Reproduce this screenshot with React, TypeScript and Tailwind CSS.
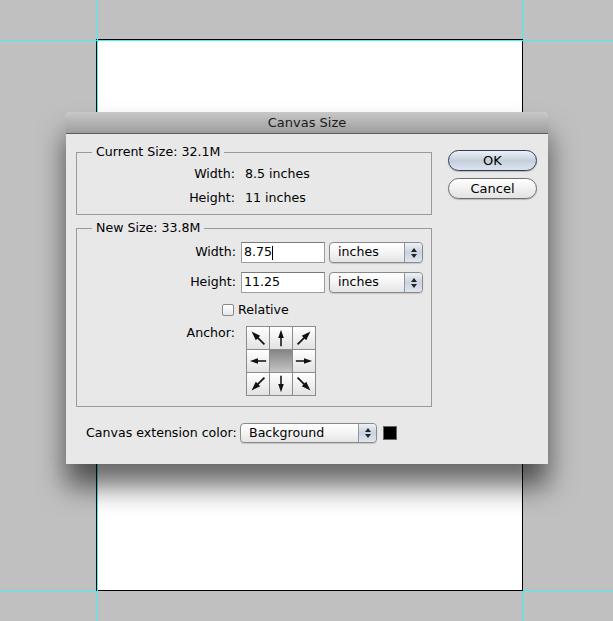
import React from 'react';

const arrows = [
  { angle: -45, diag: true },
  { angle: 0, diag: false },
  { angle: 45, diag: true },
  { angle: -90, diag: false },
  null,
  { angle: 90, diag: false },
  { angle: -135, diag: true },
  { angle: 180, diag: false },
  { angle: 135, diag: true },
];

function Arrow({ angle, diag }: { angle: number; diag: boolean }) {
  const s = diag ? 1.12 : 1;
  return (
    <svg width="22" height="22" viewBox="0 0 23 23">
      <g transform={`rotate(${angle} 11.5 11.5) translate(11.5 11.5) scale(${s}) translate(-11.5 -11.5)`}>
        <line x1="11.5" y1="20" x2="11.5" y2="9" stroke="#111" strokeWidth="1.6" />
        <polygon points="11.5,3 8.6,11.5 14.4,11.5" fill="#111" />
      </g>
    </svg>
  );
}

function Stepper() {
  return (
    <div className="flex flex-col items-center justify-center gap-[2px] w-[18px] h-full border-l border-[#8f96a3] rounded-r-[4px] bg-gradient-to-b from-[#eef2f7] via-[#c9d2de] to-[#dfe6ef]">
      <svg width="6" height="4" viewBox="0 0 6 4"><polygon points="3,0 6,4 0,4" fill="#222" /></svg>
      <svg width="6" height="4" viewBox="0 0 6 4"><polygon points="0,0 6,0 3,4" fill="#222" /></svg>
    </div>
  );
}

function Select({ value, width }: { value: string; width: string }) {
  return (
    <div className={`flex items-stretch h-full ${width} rounded-[4px] border border-[#8a8a8a] bg-gradient-to-b from-white via-[#f4f4f4] to-[#e4e4e4] shadow-[0_1px_1px_rgba(0,0,0,0.15)]`}>
      <div className="flex-1 flex items-center pl-[8px] text-black">{value}</div>
      <Stepper />
    </div>
  );
}

function Input({ value, caret }: { value: string; caret?: boolean }) {
  return (
    <div className="flex items-center w-[84px] h-[21px] bg-white border border-[#9c9c9c] border-t-[#7a7a7a] pl-[2px]">
      <span>{value}</span>
      {caret && <span className="w-px h-[14px] bg-black" />}
    </div>
  );
}

export default function App() {
  return (
    <div className="relative w-[613px] h-[621px] bg-[#c0c0c0] overflow-hidden font-['DejaVu_Sans',sans-serif] text-[12.6px] text-black">
      {/* guides under the page */}
      <div className="absolute left-[522px] top-0 w-px h-full bg-[#36f5f5]" />
      <div className="absolute left-0 top-[590px] w-full h-px bg-[#36f5f5]" />

      {/* document page */}
      <div className="absolute left-[96px] top-[39px] w-[427px] h-[552px] bg-white border border-black" />

      {/* guides over the page */}
      <div className="absolute left-[97px] top-0 w-px h-full bg-[#36f5f5]" />
      <div className="absolute left-0 top-[40px] w-full h-px bg-[#36f5f5]" />

      {/* dialog */}
      <div className="absolute left-[66px] top-[112px] w-[482px] h-[352px] flex flex-col rounded-t-[5px] bg-[#e8e8e8] shadow-[0_22px_28px_rgba(0,0,0,0.6)]">
        <div className="h-[22px] flex items-center justify-center rounded-t-[5px] bg-gradient-to-b from-[#c8c8c8] to-[#9e9e9e] border-b border-[#5c5c5c] text-[13px] text-[#1a1a1a]">
          Canvas Size
        </div>

        <div className="flex pl-[10px] pr-[11px] pt-[16px]">
          <div className="flex flex-col w-[356px] mt-[2px]">
            {/* current size */}
            <div className="relative h-[63px] border border-[#9a9a9a] flex flex-col pt-[11px] gap-[4px]">
              <span className="absolute left-[15px] top-[-9px] px-[4px] bg-[#e8e8e8] leading-[16px]">Current Size: 32.1M</span>
              <div className="flex items-center h-[20px]">
                <span className="w-[158px] text-right">Width:</span>
                <span className="ml-[10px]">8.5 inches</span>
              </div>
              <div className="flex items-center h-[20px]">
                <span className="w-[158px] text-right">Height:</span>
                <span className="ml-[10px]">11 inches</span>
              </div>
            </div>

            {/* new size */}
            <div className="relative mt-[13px] h-[179px] border border-[#9a9a9a] flex flex-col pt-[13px]">
              <span className="absolute left-[15px] top-[-9px] px-[4px] bg-[#e8e8e8] leading-[16px]">New Size: 33.8M</span>
              <div className="flex items-center h-[21px]">
                <span className="w-[159px] text-right">Width:</span>
                <div className="ml-[5px]"><Input value="8.75" caret /></div>
                <div className="ml-[4px] h-[21px]"><Select value="inches" width="w-[94px]" /></div>
              </div>
              <div className="flex items-center h-[21px] mt-[9px]">
                <span className="w-[159px] text-right">Height:</span>
                <div className="ml-[5px]"><Input value="11.25" /></div>
                <div className="ml-[4px] h-[21px]"><Select value="inches" width="w-[94px]" /></div>
              </div>
              <div className="flex items-center h-[14px] mt-[10px] pl-[145px]">
                <div className="w-[12px] h-[12px] rounded-[2px] border border-[#8a8a8a] bg-gradient-to-b from-white to-[#e6e6e6]" />
                <span className="ml-[4px]">Relative</span>
              </div>
              <div className="flex items-start mt-[9px]">
                <span className="w-[158px] text-right leading-[14px]">Anchor:</span>
                <div className="ml-[11px] grid grid-cols-3 grid-rows-3 w-[70px] h-[70px] border border-[#8c8c8c] bg-[#8c8c8c] gap-px overflow-hidden">
                  {arrows.map((a, i) =>
                    a ? (
                      <div key={i} className="flex items-center justify-center overflow-hidden bg-gradient-to-b from-white to-[#e2e2e2]">
                        <Arrow angle={a.angle} diag={a.diag} />
                      </div>
                    ) : (
                      <div key={i} className="bg-gradient-to-b from-[#848484] to-[#c6c6c6]" />
                    )
                  )}
                </div>
              </div>
            </div>

            {/* extension color */}
            <div className="flex items-center h-[20px] mt-[16px] pl-[10px]">
              <span className="w-[154px]">Canvas extension color:</span>
              <div className="h-[20px]"><Select value="Background" width="w-[137px]" /></div>
              <div className="ml-[6px] w-[14px] h-[14px] bg-black border border-[#666]" />
            </div>
          </div>

          <div className="ml-auto flex flex-col gap-[7px]">
            <button className="w-[89px] h-[21px] rounded-full border border-[#2f3d5c] bg-gradient-to-b from-[#eef2f7] via-[#c5cfdc] to-[#dbe3ee] text-[13px] leading-none shadow-[0_1px_1px_rgba(0,0,0,0.2)]">
              OK
            </button>
            <button className="w-[89px] h-[21px] rounded-full border border-[#6e6e6e] bg-gradient-to-b from-white via-[#f1f1f1] to-[#e2e2e2] text-[13px] leading-none shadow-[0_1px_1px_rgba(0,0,0,0.2)]">
              Cancel
            </button>
          </div>
        </div>
      </div>
    </div>
  );
}
